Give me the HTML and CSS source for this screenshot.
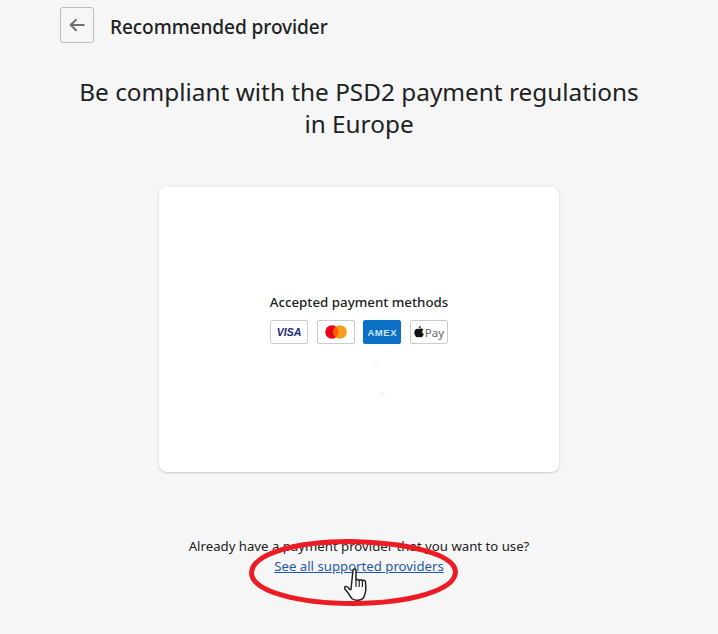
FILE: index.html
```html
<!DOCTYPE html>
<html lang="en">
<head>
  <meta charset="UTF-8">
  <title>Recommended provider</title>
  <link rel="stylesheet" href="styles.css">
</head>
<body>
  <div class="page">
    <div class="topbar">
      <button class="back-button" aria-label="Back">
        <svg width="20" height="20" viewBox="0 0 20 20"><path d="M17.5 10H4M9.5 4.2 3.7 10l5.8 5.8" fill="none" stroke="#6d7175" stroke-width="2"/></svg>
      </button>
      <div class="page-title">Recommended provider</div>
    </div>

    <h1 class="headline">Be compliant with the PSD2 payment regulations<br>in Europe</h1>

    <div class="card">
      <div class="card-label">Accepted payment methods</div>
      <div class="methods">
        <div class="method method-visa"><span>VISA</span></div>
        <div class="method">
          <svg width="22" height="14" viewBox="0 0 22 14"><circle cx="7" cy="7" r="6.8" fill="#eb001b"/><circle cx="15" cy="7" r="6.8" fill="#f79e1b"/><path d="M11 1.6a6.8 6.8 0 0 1 0 10.8 6.8 6.8 0 0 1 0-10.8z" fill="#ff5f00"/></svg>
        </div>
        <div class="method method-amex"><span>AMEX</span></div>
        <div class="method method-apple">
          <svg width="10" height="12" viewBox="0 0 11 13"><path d="M7.6 0c.1 1-.9 2.600-2.500 2.600C5 1.300 6.200.2 7.600 0zM5.300 3.300c.6 0 1.300-.6 2.500-.6.900 0 1.900.5 2.500 1.300-2 1.200-1.600 3.900.5 4.700-.5 1.500-1.700 3.700-2.900 3.700-.8 0-1.100-.5-2.100-.5s-1.400.5-2.100.5C2.300 12.400.3 9.600.3 7 .3 4.200 2 2.800 3.500 2.800c.8 0 1.400.5 1.800.5z" fill="#111"/></svg>
          <span>Pay</span>
        </div>
      </div>
      <i class="smudge smudge-a"></i>
      <i class="smudge smudge-b"></i>
    </div>

    <div class="footer-note">
      <div>Already have a payment provider that you want to use?</div>
      <a class="provider-link" href="#">See all supported providers</a>
    </div>
  </div>

  <!-- hand-drawn markup on top of the screenshot -->
  <svg class="scribble" width="218" height="74" viewBox="0 0 218 74">
    <path d="M107 5.500C50 5 6 18 5.500 37 6 56 55 67.500 107 67.500 165 67 209 54 209.500 36 209 18 160 6 100 5.500" fill="none" stroke="#ed1c24" stroke-width="5" stroke-linecap="round"/>
  </svg>
  <svg class="hand" width="27" height="35" viewBox="0 0 27 35">
    <path d="M9 2.500c0-2 3-2 3 0v10c.4-1.500 3-1.500 3.200.2.400-1.500 3-1.400 3.200.4.500-1.300 3-1 3 .8 0 0 .6 5.100.3 8.600-.3 3.600-1.500 4.500-2.300 7.500-2 2.500-8 3-11 1-2-1.500-3-4.500-5-7-1.500-2-3.500-3.500-3-4.500 1-2 3.500-.8 5 1.500 1 1 1.600 1 1.600 0z" fill="#fff" stroke="#222" stroke-width="1.500" stroke-linejoin="round"/>
    <path d="M12 13v6M15.200 13v6M18.400 13v6" stroke="#222" stroke-width="1.200" fill="none"/>
  </svg>
</body>
</html>
```

FILE: styles.css
```css
body {
  margin: 0;
  background-color: #f6f6f7;
  color: #202223;
  font-family: "Noto Sans", "Open Sans", Arial, sans-serif;
  height: 634px;
  overflow: hidden;
  position: relative;
}

.page {
  display: flex;
  flex-direction: column;
  align-items: center;
  padding-top: 7px;
}

.topbar {
  align-self: stretch;
  display: flex;
  align-items: flex-start;
  gap: 16px;
  padding-left: 60px;
}

.back-button {
  width: 34px;
  height: 36px;
  padding: 0;
  display: flex;
  align-items: center;
  justify-content: center;
  background: none;
  border: 1px solid #babfc3;
  border-radius: 3px;
}

.page-title {
  font-size: 19.1px;
  font-weight: 500;
  letter-spacing: -0.1px;
  line-height: 40px;
}

.headline {
  margin: 29px 0 47px;
  width: 600px;
  font-size: 24.35px;
  font-weight: 400;
  line-height: 32px;
  text-align: center;
}

.card {
  width: 400px;
  height: 285px;
  box-sizing: border-box;
  padding-top: 105px;
  display: flex;
  flex-direction: column;
  align-items: center;
  background: #fff;
  border-radius: 8px;
  box-shadow: 0 0 5px rgba(23, 24, 24, 0.05), 0 1px 2px rgba(0, 0, 0, 0.15);
  position: relative;
}

.card-label {
  font-size: 13.3px;
  font-weight: 500;
  line-height: 20px;
}

.methods {
  display: flex;
  gap: 8.67px;
  margin-top: 8px;
}

.method {
  box-sizing: border-box;
  width: 38px;
  height: 24px;
  display: flex;
  align-items: center;
  justify-content: center;
  gap: 1px;
  background: #fff;
  border: 1px solid #c9cccf;
  border-radius: 2px;
}

.method-visa span {
  color: #1a2a78;
  font-family: "Liberation Sans", Arial, sans-serif;
  font-size: 10.5px;
  font-style: italic;
  font-weight: 700;
}

.method-amex {
  background: #0a70c6;
  border-color: #0a70c6;
}

.method-amex span {
  color: #cfe4f6;
  font-family: "Liberation Sans", Arial, sans-serif;
  font-size: 9.5px;
  font-weight: 700;
  letter-spacing: 0.6px;
}

.method-apple span {
  color: #666;
  font-size: 11.5px;
}

.smudge {
  position: absolute;
  width: 6px;
  height: 3px;
  background: #f1f1f1;
  border-radius: 50%;
  filter: blur(1px);
}

.smudge-a { left: 214px; top: 174px; }
.smudge-b { left: 220px; top: 206px; }

.footer-note {
  margin-top: 64px;
  font-size: 13.2px;
  line-height: 20px;
  text-align: center;
}

.provider-link {
  color: #1f5aa8;
}

.scribble {
  position: absolute;
  left: 246px;
  top: 536px;
}

.hand {
  position: absolute;
  left: 344px;
  top: 568px;
}
```
